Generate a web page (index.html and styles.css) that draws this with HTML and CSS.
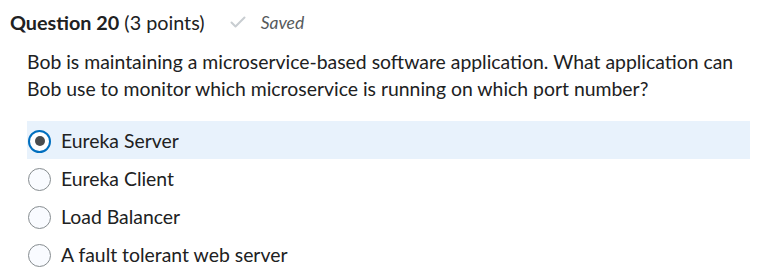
FILE: index.html
```html
<!DOCTYPE html>
<html lang="en">
<head>
  <meta charset="UTF-8">
  <meta name="viewport" content="width=device-width, initial-scale=1.0">
  <title>Question 20</title>
  <link rel="stylesheet" href="styles.css">
</head>
<body>
  <div class="pregunta">
    <div class="cabecera">
      <h2><strong>Question 20</strong> (3 points)</h2>
      <span class="guardado">
        <svg class="check" width="16" height="12" viewBox="0 0 16 12">
          <path d="M1.5 6.5 L5.5 10.5 L14.5 1.5" fill="none" stroke="#c8cdd1" stroke-width="2" stroke-linecap="round" stroke-linejoin="round"/>
        </svg>
        <em>Saved</em>
      </span>
    </div>

    <p class="enunciado">Bob is maintaining a microservice-based software application. What application can Bob use to monitor which microservice is running on which port number?</p>

    <div class="opciones">
      <label class="opcion activa"><span class="radio marcado"></span>Eureka Server</label>
      <label class="opcion"><span class="radio"></span>Eureka Client</label>
      <label class="opcion"><span class="radio"></span>Load Balancer</label>
      <label class="opcion"><span class="radio"></span>A fault tolerant web server</label>
    </div>
  </div>
</body>
</html>
```

FILE: styles.css
```css
body {
  margin: 0;
  font-family: Lato, 'Noto Sans', sans-serif;
  color: #202122;
  background-color: #ffffff;
}

.pregunta {
  padding: 9px 29px 0 10px;
}

.cabecera {
  display: flex;
  align-items: center;
  height: 26px;
}

h2 {
  margin: 0;
  font-size: 19.8px;
  font-weight: 400;
}

h2 strong {
  font-weight: 700;
}

.guardado {
  display: flex;
  align-items: center;
  margin-left: 25px;
  color: #565a5c;
  font-size: 17.5px;
}

.check {
  margin-right: 15px;
}

.enunciado {
  margin: 13px 0 0 17px;
  font-size: 19.4px;
  line-height: 27px;
}

.opciones {
  margin: 19px 0 0 17px;
  display: flex;
  flex-direction: column;
}

.opcion {
  display: flex;
  align-items: center;
  height: 38px;
  font-size: 19.4px;
}

.opcion.activa {
  background-color: #e8f2fc;
}

.radio {
  box-sizing: border-box;
  width: 23px;
  height: 23px;
  margin: 2px 10px 0 1px;
  border: 1px solid #868c8f;
  border-radius: 50%;
  background-color: #f9fbff;
  display: flex;
  align-items: center;
  justify-content: center;
}

.radio.marcado {
  border: 2px solid #006fbf;
  background-color: #ffffff;
}

.radio.marcado::after {
  content: '';
  width: 10px;
  height: 10px;
  border-radius: 50%;
  background-color: #494c4e;
}
```
